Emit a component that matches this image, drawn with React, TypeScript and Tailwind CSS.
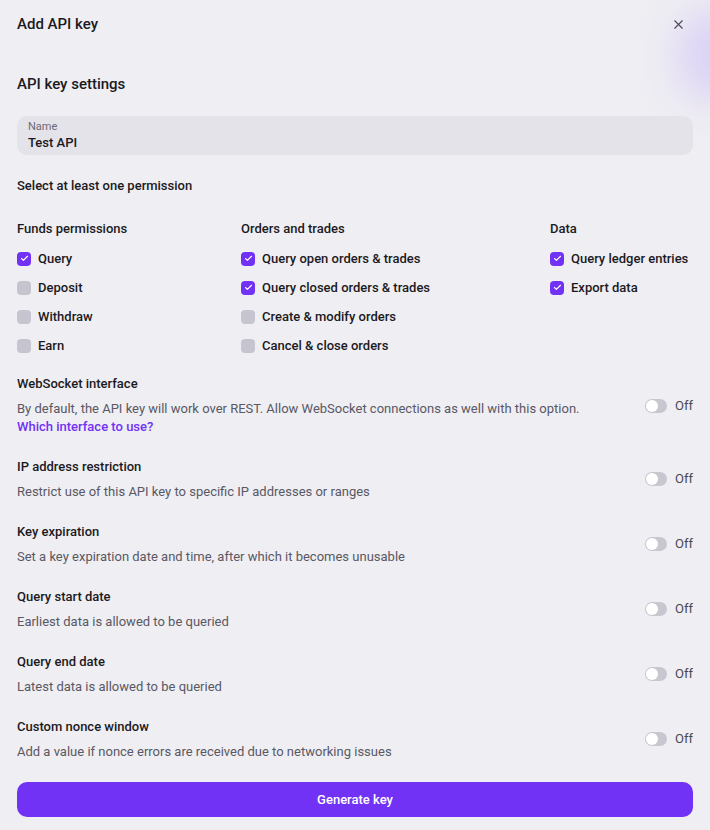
import { X, Check } from "lucide-react";

const funds = [
  { label: "Query", on: true },
  { label: "Deposit", on: false },
  { label: "Withdraw", on: false },
  { label: "Earn", on: false },
];

const orders = [
  { label: "Query open orders & trades", on: true },
  { label: "Query closed orders & trades", on: true },
  { label: "Create & modify orders", on: false },
  { label: "Cancel & close orders", on: false },
];

const data = [
  { label: "Query ledger entries", on: true },
  { label: "Export data", on: true },
];

const options = [
  { title: "IP address restriction", desc: "Restrict use of this API key to specific IP addresses or ranges" },
  { title: "Key expiration", desc: "Set a key expiration date and time, after which it becomes unusable" },
  { title: "Query start date", desc: "Earliest data is allowed to be queried" },
  { title: "Query end date", desc: "Latest data is allowed to be queried" },
  { title: "Custom nonce window", desc: "Add a value if nonce errors are received due to networking issues" },
];

const Box = ({ label, on }: { label: string; on: boolean }) => (
  <div className="flex h-[29px] items-center gap-[7px] whitespace-nowrap">
    {on ? (
      <span className="flex h-[14px] w-[14px] items-center justify-center rounded-[4px] bg-[#7132f5]">
        <Check className="h-[9px] w-[9px] text-white" strokeWidth={3} />
      </span>
    ) : (
      <span className="h-[14px] w-[14px] rounded-[4px] bg-[#c6c5cf]" />
    )}
    <span className="text-[13px] font-medium text-[#1b1a22]">{label}</span>
  </div>
);

const Toggle = () => (
  <div className="flex shrink-0 items-center gap-[8px]">
    <span className="flex h-[14px] w-[22px] items-center rounded-full bg-[#c8c7d0] px-[1px]">
      <span className="h-[12px] w-[12px] rounded-full bg-white" />
    </span>
    <span className="text-[13px] text-[#4a4953]">Off</span>
  </div>
);

export default function App() {
  return (
    <div
      className="relative min-h-[830px] w-full overflow-hidden bg-[#efeef3] text-[#1b1a22]"
      style={{ fontFamily: "Roboto, 'Noto Sans', sans-serif" }}
    >
      <div className="pointer-events-none absolute -right-[40px] top-[10px] h-[90px] w-[70px] rounded-full bg-[#d9d0f5] blur-[20px]" />
      <div className="relative px-[17px]">
        <div className="flex h-[48px] items-center justify-between">
          <h1 className="text-[15px] font-medium">Add API key</h1>
          <X className="mr-[7px] h-[15px] w-[15px] text-[#4a4953]" strokeWidth={1.75} />
        </div>

        <h2 className="mt-[24px] text-[15px] font-medium leading-[24px]">API key settings</h2>

        <div className="mt-[20px] flex h-[39px] flex-col justify-center rounded-[10px] bg-[#e4e3ea] px-[11px]">
          <span className="text-[11px] leading-[14px] text-[#6b6a74]">Name</span>
          <span className="text-[13px] font-medium leading-[17px]">Test API</span>
        </div>

        <p className="mt-[22px] text-[13px] font-medium leading-[18px]">Select at least one permission</p>

        <div className="mt-[25px] flex">
          <div className="w-[224px] shrink-0">
            <p className="mb-[6px] text-[13px] font-medium leading-[18px]">Funds permissions</p>
            {funds.map((f) => (
              <Box key={f.label} {...f} />
            ))}
          </div>
          <div className="w-[309px] shrink-0">
            <p className="mb-[6px] text-[13px] font-medium leading-[18px]">Orders and trades</p>
            {orders.map((f) => (
              <Box key={f.label} {...f} />
            ))}
          </div>
          <div className="shrink-0">
            <p className="mb-[6px] text-[13px] font-medium leading-[18px]">Data</p>
            {data.map((f) => (
              <Box key={f.label} {...f} />
            ))}
          </div>
        </div>

        <div className="mt-[15px] flex items-center justify-between">
          <div>
            <p className="text-[13px] font-medium leading-[18px]">WebSocket interface</p>
            <p className="mt-[7px] text-[13px] leading-[18px] text-[#595863]">
              By default, the API key will work over REST. Allow WebSocket connections as well with this option.
            </p>
            <p className="text-[13px] font-medium leading-[18px] text-[#7132f5]">Which interface to use?</p>
          </div>
          <Toggle />
        </div>

        {options.map((o) => (
          <div key={o.title} className="mt-[21px] flex h-[44px] items-center justify-between">
            <div>
              <p className="text-[13px] font-medium leading-[18px]">{o.title}</p>
              <p className="mt-[7px] text-[13px] leading-[18px] text-[#595863]">{o.desc}</p>
            </div>
            <Toggle />
          </div>
        ))}

        <button className="mt-[21px] flex h-[35px] w-full items-center justify-center rounded-[10px] bg-[#7132f5] text-[13px] font-medium text-white">
          Generate key
        </button>
      </div>
    </div>
  );
}
